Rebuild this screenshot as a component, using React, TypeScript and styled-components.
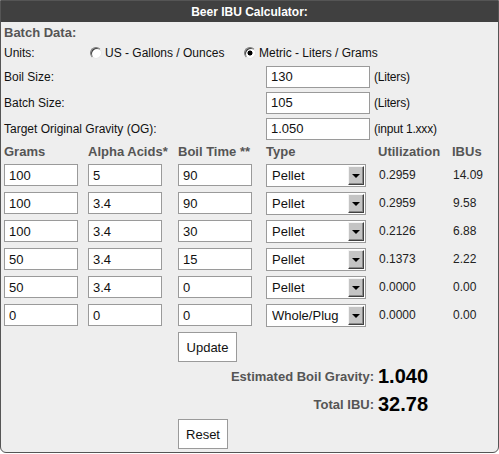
import React, { useState } from 'react';
import styled, { createGlobalStyle } from 'styled-components';

const Global = createGlobalStyle`
  body {
    margin: 0;
    background: #ffffff;
  }
`;

const Frame = styled.div`
  width: 499px;
  height: 453px;
  box-sizing: border-box;
  border: 1px solid #555;
  border-radius: 0 0 6px 6px;
  background: #eeeeee;
  font-family: "Liberation Sans", Arial, sans-serif;
  overflow: hidden;
`;

const TitleBar = styled.div`
  height: 21px;
  background: #404040;
  color: #ffffff;
  font-size: 12px;
  font-weight: bold;
  display: flex;
  align-items: center;
  justify-content: center;
`;

const Body = styled.div`
  padding: 0 3px;
`;

const SectionTitle = styled.div`
  height: 21px;
  line-height: 21px;
  font-size: 13px;
  font-weight: bold;
  color: #555;
`;

const UnitsRow = styled.div`
  height: 19px;
  display: flex;
  align-items: center;
  font-size: 12px;
  color: #111;
`;

const RowLabel = styled.div<{ $w: number }>`
  width: ${(p) => p.$w}px;
  flex: none;
  font-size: 12px;
  color: #111;
`;

const RadioOption = styled.label<{ $w?: number }>`
  display: flex;
  align-items: center;
  gap: 3px;
  width: ${(p) => (p.$w ? `${p.$w}px` : 'auto')};
  padding-left: 2px;
  font-size: 12px;
  color: #111;
`;

const Radio = styled.input`
  appearance: none;
  margin: 0;
  width: 12px;
  height: 12px;
  border-radius: 50%;
  border: 1px solid;
  border-color: #7a7a7a #e8e8e8 #e8e8e8 #7a7a7a;
  box-shadow: inset 1px 1px 0 #404040;
  background: #ffffff;
  box-sizing: border-box;

  &:checked {
    background: radial-gradient(circle, #000 0 2.2px, #fff 2.8px);
  }
`;

const FieldRow = styled.div`
  display: flex;
  align-items: center;
  height: 21px;
  margin-top: 5px;

  &:first-of-type {
    margin-top: 4px;
  }
`;

const TextBox = styled.input<{ $w: number }>`
  width: ${(p) => p.$w}px;
  height: 22px;
  box-sizing: border-box;
  margin: 0;
  padding: 0 0 0 4px;
  border: 1px solid #9a9a9a;
  background: #ffffff;
  font-family: "Liberation Sans", Arial, sans-serif;
  font-size: 13px;
  color: #111;
  outline: none;
`;

const UnitNote = styled.span`
  margin-left: 4px;
  font-size: 12px;
  color: #111;
  letter-spacing: -0.2px;
`;

const Table = styled.div`
  display: grid;
  grid-template-columns: 84px 90px 88px 112px 74px 1fr;
  grid-auto-rows: 22px;
  row-gap: 6px;
  align-items: center;
`;

const HeadCell = styled.div`
  height: 25px;
  display: flex;
  align-items: center;
  font-size: 13px;
  font-weight: bold;
  color: #555;
  white-space: nowrap;
`;

const HeadRow = styled.div`
  display: grid;
  grid-template-columns: 84px 90px 88px 112px 74px 1fr;
`;

const Value = styled.div`
  font-size: 12px;
  color: #222;
  padding-left: 1px;
`;

const SelectWrap = styled.div`
  position: relative;
  width: 100px;
  height: 23px;
`;

const Select = styled.select`
  appearance: none;
  width: 100%;
  height: 100%;
  margin: 0;
  padding: 0 0 0 5px;
  box-sizing: border-box;
  border: 1px solid #9a9a9a;
  border-radius: 0;
  background: #ffffff;
  font-family: "Liberation Sans", Arial, sans-serif;
  font-size: 13px;
  color: #111;
  outline: none;
`;

const DropButton = styled.span`
  position: absolute;
  top: 2px;
  right: 2px;
  width: 16px;
  height: 19px;
  box-sizing: border-box;
  background: #c4c4c4;
  border: 1px solid;
  border-color: #f4f4f4 #404040 #404040 #f4f4f4;
  box-shadow: inset -1px -1px 0 #8a8a8a;
  display: flex;
  align-items: center;
  justify-content: center;
  pointer-events: none;

  &::after {
    content: '';
    border-left: 4px solid transparent;
    border-right: 4px solid transparent;
    border-top: 4px solid #000;
    margin-top: 1px;
  }
`;

const Button = styled.button<{ $w: number; $mt: number }>`
  display: block;
  width: ${(p) => p.$w}px;
  height: 30px;
  margin: ${(p) => p.$mt}px 0 0 174px;
  padding: 0;
  border: 1px solid #9a9a9a;
  background: #ffffff;
  font-family: "Liberation Sans", Arial, sans-serif;
  font-size: 13px;
  color: #111;
`;

const SummaryRow = styled.div`
  display: grid;
  grid-template-columns: 370px 1fr;
  column-gap: 4px;
  height: 28px;
  align-items: center;
`;

const SummaryLabel = styled.div`
  text-align: right;
  font-size: 13px;
  font-weight: bold;
  color: #555;
`;

const SummaryValue = styled.div`
  font-size: 20px;
  font-weight: bold;
  color: #000;
`;

type Hop = { grams: string; alpha: string; time: string; type: string; util: string; ibu: string };

const hops: Hop[] = [
  { grams: '100', alpha: '5', time: '90', type: 'Pellet', util: '0.2959', ibu: '14.09' },
  { grams: '100', alpha: '3.4', time: '90', type: 'Pellet', util: '0.2959', ibu: '9.58' },
  { grams: '100', alpha: '3.4', time: '30', type: 'Pellet', util: '0.2126', ibu: '6.88' },
  { grams: '50', alpha: '3.4', time: '15', type: 'Pellet', util: '0.1373', ibu: '2.22' },
  { grams: '50', alpha: '3.4', time: '0', type: 'Pellet', util: '0.0000', ibu: '0.00' },
  { grams: '0', alpha: '0', time: '0', type: 'Whole/Plug', util: '0.0000', ibu: '0.00' },
];

const App: React.FC = () => {
  const [units, setUnits] = useState('metric');

  return (
    <>
      <Global />
      <Frame>
        <TitleBar>Beer IBU Calculator:</TitleBar>
        <Body>
          <SectionTitle>Batch Data:</SectionTitle>
          <UnitsRow>
            <RowLabel $w={84}>Units:</RowLabel>
            <RadioOption $w={152}>
              <Radio type="radio" name="units" checked={units === 'us'} onChange={() => setUnits('us')} />
              US - Gallons / Ounces
            </RadioOption>
            <RadioOption>
              <Radio type="radio" name="units" checked={units === 'metric'} onChange={() => setUnits('metric')} />
              Metric - Liters / Grams
            </RadioOption>
          </UnitsRow>

          <div>
            <FieldRow>
              <RowLabel $w={262}>Boil Size:</RowLabel>
              <TextBox $w={104} defaultValue="130" />
              <UnitNote>(Liters)</UnitNote>
            </FieldRow>
            <FieldRow>
              <RowLabel $w={262}>Batch Size:</RowLabel>
              <TextBox $w={104} defaultValue="105" />
              <UnitNote>(Liters)</UnitNote>
            </FieldRow>
            <FieldRow>
              <RowLabel $w={262}>Target Original Gravity (OG):</RowLabel>
              <TextBox $w={104} defaultValue="1.050" />
              <UnitNote>(input 1.xxx)</UnitNote>
            </FieldRow>
          </div>

          <HeadRow>
            <HeadCell>Grams</HeadCell>
            <HeadCell>Alpha Acids*</HeadCell>
            <HeadCell>Boil Time **</HeadCell>
            <HeadCell>Type</HeadCell>
            <HeadCell>Utilization</HeadCell>
            <HeadCell>IBUs</HeadCell>
          </HeadRow>

          <Table>
            {hops.map((h, i) => (
              <React.Fragment key={i}>
                <TextBox $w={74} defaultValue={h.grams} />
                <TextBox $w={74} defaultValue={h.alpha} />
                <TextBox $w={74} defaultValue={h.time} />
                <SelectWrap>
                  <Select defaultValue={h.type}>
                    <option>Pellet</option>
                    <option>Whole/Plug</option>
                  </Select>
                  <DropButton />
                </SelectWrap>
                <Value>{h.util}</Value>
                <Value>{h.ibu}</Value>
              </React.Fragment>
            ))}
          </Table>

          <Button $w={59} $mt={6}>Update</Button>

          <SummaryRow>
            <SummaryLabel>Estimated Boil Gravity:</SummaryLabel>
            <SummaryValue>1.040</SummaryValue>
          </SummaryRow>
          <SummaryRow>
            <SummaryLabel>Total IBU:</SummaryLabel>
            <SummaryValue>32.78</SummaryValue>
          </SummaryRow>

          <Button $w={50} $mt={1}>Reset</Button>
        </Body>
      </Frame>
    </>
  );
};

export default App;
